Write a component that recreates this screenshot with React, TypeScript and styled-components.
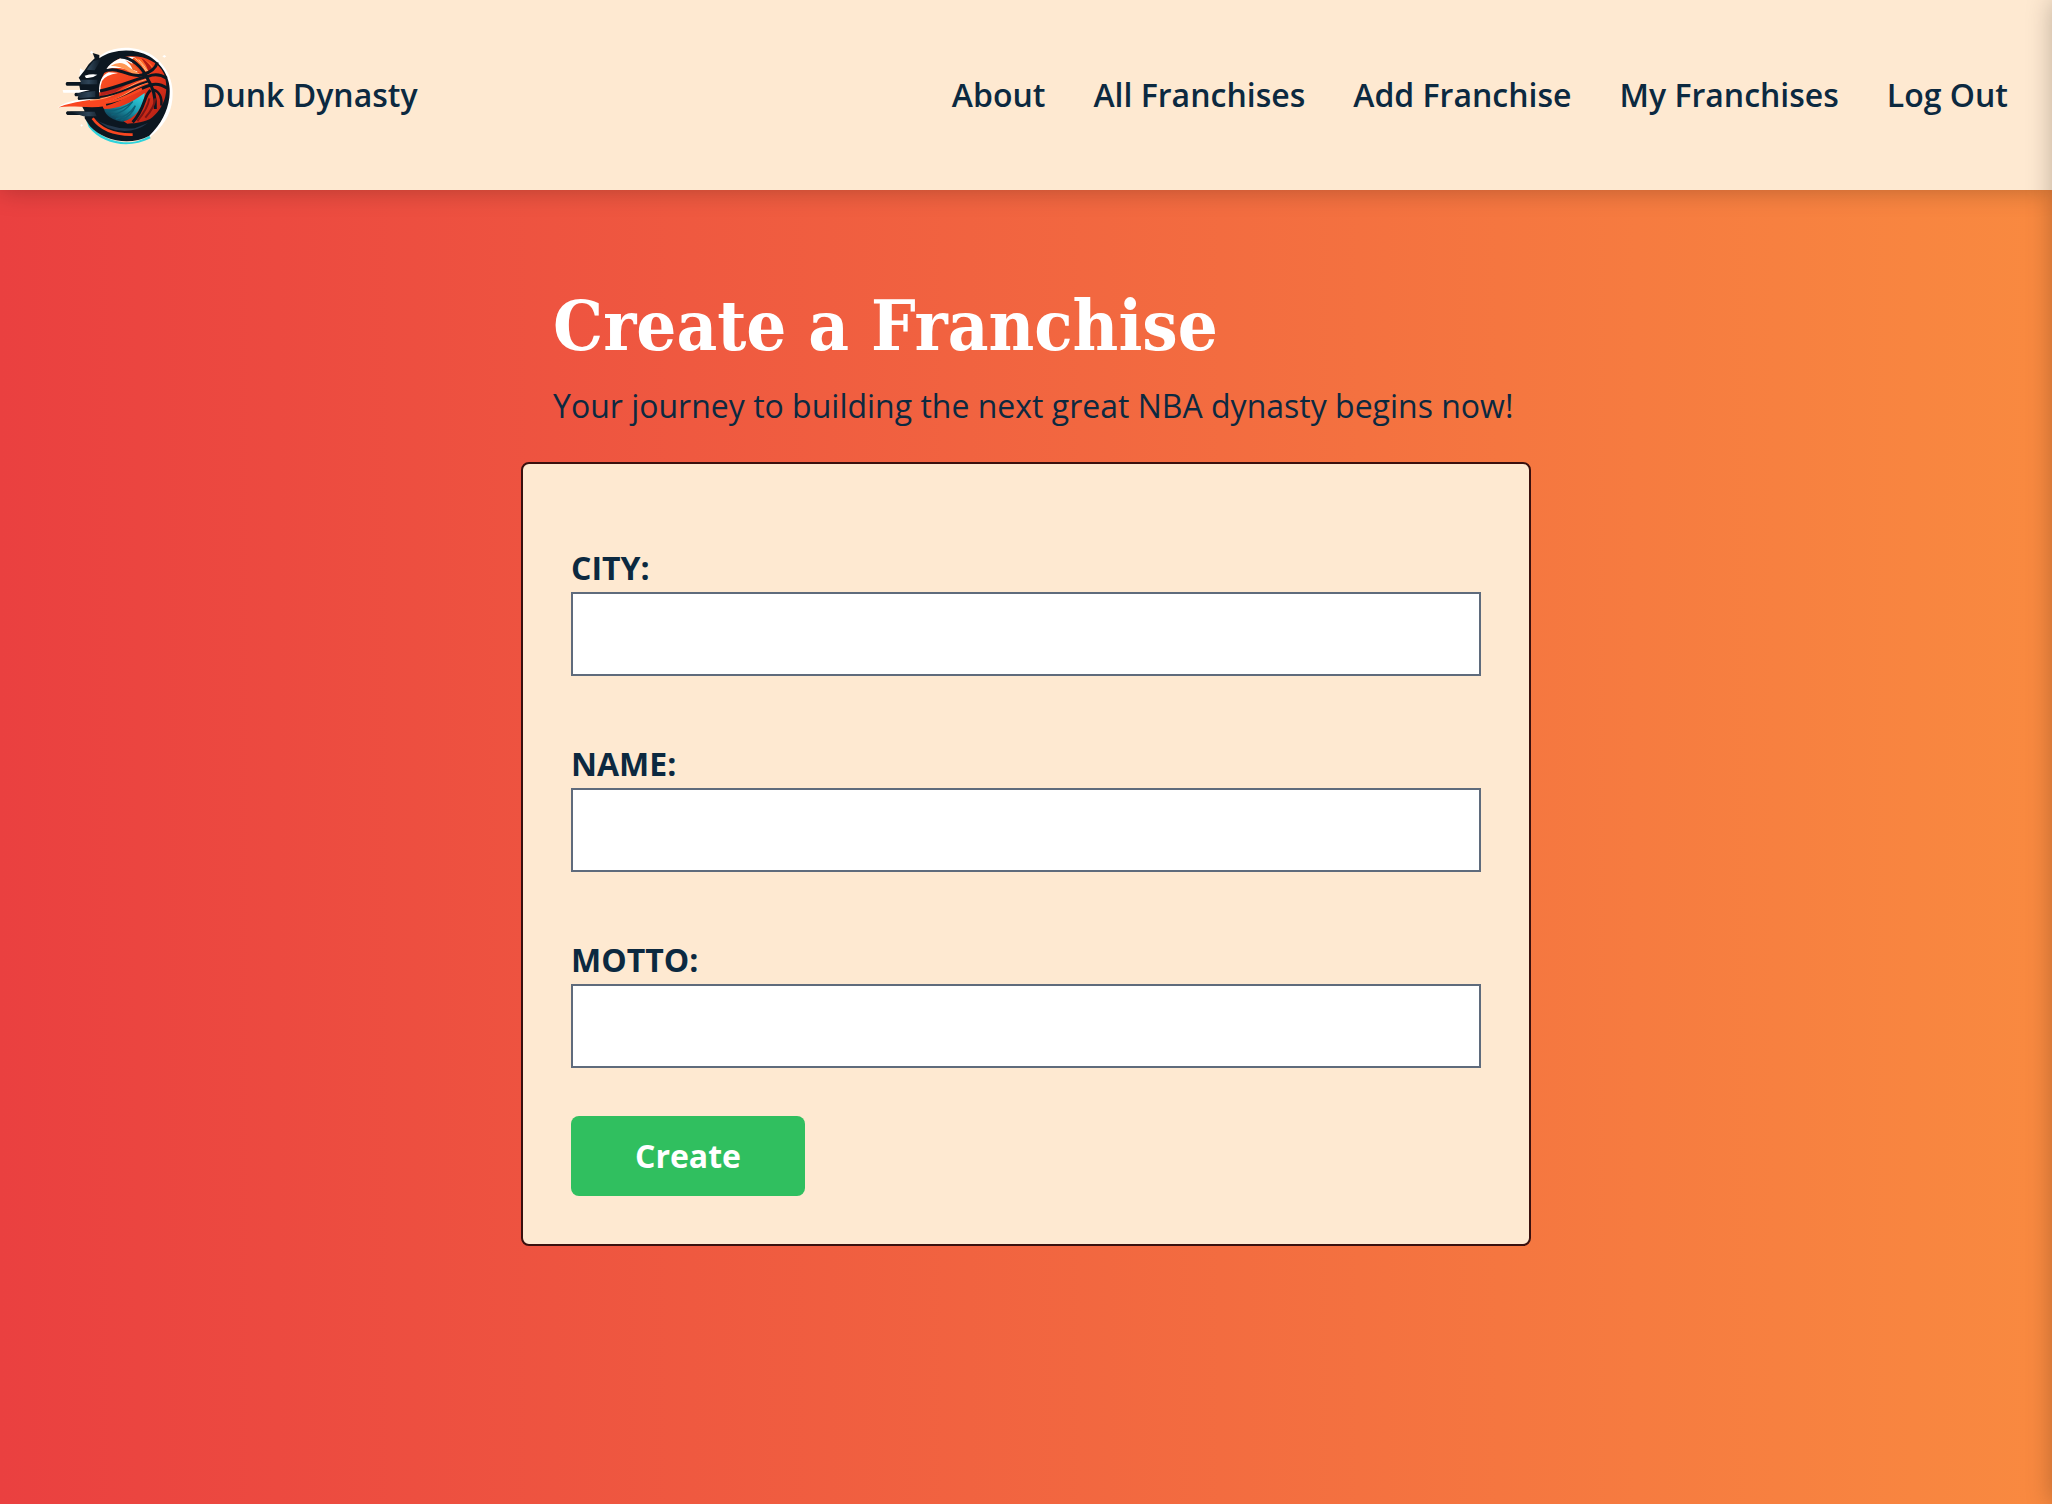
import React from 'react';
import styled, { createGlobalStyle } from 'styled-components';

const navy = '#0c2940';
const cream = '#fee9d1';

const GlobalStyle = createGlobalStyle`
  *, *::before, *::after { box-sizing: border-box; }
  body {
    margin: 0;
    color: ${navy};
    font-family: 'Open Sans', 'Noto Sans', sans-serif;
    font-size: 32px;
    line-height: 48px;
  }
`;

const Page = styled.div`
  min-height: 100vh;
  display: flex;
  flex-direction: column;
  overflow: hidden;
  background: linear-gradient(to right, #ea4040, #f98a40);
`;

const Header = styled.header`
  display: flex;
  align-items: center;
  justify-content: space-between;
  padding: 32px 44px 32px 50px;
  background: ${cream};
  box-shadow: 0 0 24px rgba(0, 0, 0, 0.25);
  font-weight: 600;
`;

const Brand = styled.a`
  display: flex;
  align-items: center;
  gap: 12px;
  color: inherit;
  text-decoration: none;
`;

const Logo = styled.svg`
  display: block;
  width: 140px;
  height: 120px;
  margin: 3px 0;
`;

const Nav = styled.nav`
  display: flex;
  gap: 48px;
`;

const NavLink = styled.a`
  color: inherit;
  text-decoration: none;
`;

const DrawerShadow = styled.div`
  position: fixed;
  top: 0;
  bottom: 0;
  left: 100%;
  width: 400px;
  box-shadow: 0 0 24px rgba(0, 0, 0, 0.25);
  pointer-events: none;
`;

const Main = styled.main`
  align-self: center;
  width: 100%;
  max-width: 1010px;
  padding: 96px 0;
`;

const Intro = styled.div`
  padding: 0 0 32px 32px;
`;

const Title = styled.h1`
  margin: 0 0 16px;
  color: #fff;
  font-family: 'DejaVu Serif Condensed', 'DejaVu Serif', serif;
  font-size: 70px;
  line-height: 80px;
  font-weight: 700;
`;

const Subtitle = styled.p`
  margin: 0;
  font-weight: 500;
`;

const Form = styled.form`
  display: flex;
  flex-direction: column;
  align-items: flex-start;
  gap: 48px;
  padding: 80px 48px 48px;
  border: 2px solid #3a100e;
  border-radius: 8px;
  background: ${cream};
`;

const Fields = styled.div`
  align-self: stretch;
  display: flex;
  flex-direction: column;
  gap: 64px;
`;

const Field = styled.div`
  display: flex;
  flex-direction: column;
`;

const Label = styled.label`
  font-weight: 700;
  text-transform: uppercase;
`;

const Input = styled.input`
  width: 100%;
  height: 84px;
  padding: 16px;
  border: 2px solid #5f6b7c;
  border-radius: 0;
  background: #fff;
  color: inherit;
  font: inherit;
`;

const Submit = styled.button`
  padding: 16px 64px;
  border: 0;
  border-radius: 8px;
  background: #30bf5f;
  color: #fff;
  font: inherit;
  font-weight: 700;
`;

const links = ['About', 'All Franchises', 'Add Franchise', 'My Franchises', 'Log Out'];
const fields = ['City', 'Name', 'Motto'];

function BasketballLogo() {
  return (
    <Logo viewBox="0 0 420 360" aria-hidden="true">
      <defs>
        <linearGradient id="ball" x1="0" y1="0" x2="1" y2="1">
          <stop offset="0" stopColor="#ff5a26" />
          <stop offset="0.5" stopColor="#ee3a1c" />
          <stop offset="1" stopColor="#a81a14" />
        </linearGradient>
        <linearGradient id="teal" x1="1" y1="0" x2="0.3" y2="1">
          <stop offset="0" stopColor="#35dbe6" />
          <stop offset="0.5" stopColor="#1c9fb3" />
          <stop offset="1" stopColor="#0e4057" />
        </linearGradient>
        <linearGradient id="steel" x1="0" y1="0" x2="1" y2="0">
          <stop offset="0" stopColor="#0c1721" />
          <stop offset="0.6" stopColor="#2f4558" />
          <stop offset="1" stopColor="#0c1721" />
        </linearGradient>
      </defs>
      <path d="M146 66C180 34 250 26 306 60C350 90 374 140 367 194C362 240 338 276 300 306L270 290L340 180L280 70Z" fill="#fff" />
      <path d="M90 100l14 8-16 30zM120 52l5-5 5 6-5 5zM337 64l6-4 6 4-6 4zM91 271l4-3 4 3-4 4z" fill="#fff" />
      <path d="M108 254C140 310 230 346 298 302L302 310C238 342 158 330 116 276Z" fill="#2fd3dc" />
      <path d="M128 54L148 60L148 70C186 42 254 38 298 64C342 92 366 138 358 188C352 230 334 266 298 302C240 334 160 318 120 274L104 250V240H52Q44 234 52 229H104L96 214H130V196H86Q80 190 86 184H76Q70 178 78 172H92L88 152H50Q44 147 50 141H94L86 128L104 106L116 88L134 70Z" fill="#0c1721" />
      <path d="M110 104l20-26 24-6-20 34zM92 134h50v14H92zM80 174l56-6v18l-48 4zM60 230h74l6 14h-40z" fill="url(#steel)" />
      <path d="M104 122q20-6 38-3-16 12-34 10z" fill="#fff" />
      <path d="M38 165h82l-34 8H40z" fill="#fff" />
      <path d="M148 180C146 116 186 66 240 64C284 62 324 80 342 116C360 170 342 222 300 252C270 266 250 264 232 266L160 220Z" fill="url(#ball)" />
      <path d="M168 104C188 72 230 60 258 68C238 66 244 90 264 112C236 106 210 92 168 104Z" fill="#fff" />
      <path d="M182 92q32-18 54 4 20 14 36 22-24 2-42-12-16-12-48-14z" fill="#ff9956" />
      <path d="M226 76q30 12 48 38l-26-10q-6-16-22-28z" fill="#ef6029" />
      <path d="M248 68Q296 70 310 98L292 118Q272 90 248 68Z" fill="#ff6829" />
      <path d="M274 70q20 10 32 30l-8 14q-8-24-24-44z" fill="#b51b14" />
      <path d="M256 70q20 14 32 38M266 74q16 16 26 34" stroke="#ffc18a" strokeWidth="3" fill="none" />
      <path d="M147 172Q146 124 176 112L204 114Q166 120 156 138Q150 152 151 172Z" fill="#fff" />
      <path d="M154 164Q200 158 232 148L196 172L150 184Z" fill="#b5211a" />
      <path d="M162 222C208 222 246 202 284 174C284 214 254 252 218 260C190 258 166 242 162 222Z" fill="url(#teal)" />
      <path d="M172 228Q216 226 248 200Q224 234 184 240M198 252Q236 244 256 212Q246 242 212 256" stroke="#0d6177" strokeWidth="4" fill="none" />
      <path d="M26 217C66 192 134 198 182 190C226 178 256 142 298 130L302 148C266 158 220 204 164 214C118 222 68 210 26 217Z" fill="#f94620" />
      <path d="M22 218C52 194 100 192 146 192Q72 198 22 218Z" fill="#fff" />
      <path d="M120 196C196 194 236 146 292 132M166 202C220 194 250 152 296 142" stroke="#ffa66b" strokeWidth="3" fill="none" />
      <g stroke="#0c1721" strokeWidth="9" fill="none">
        <path d="M212 66C246 68 276 96 292 130C310 158 318 184 316 222" />
        <path d="M154 112C206 88 236 130 276 120C308 110 318 98 322 82" />
        <path d="M150 168C214 154 256 132 294 124Q324 112 350 130" />
        <path d="M150 186C212 178 244 152 298 138" strokeWidth="6" />
        <path d="M168 208C230 190 258 162 302 150Q326 142 352 160" />
        <path d="M310 164Q338 174 334 212" strokeWidth="7" />
        <path d="M302 166C282 178 286 222 248 262" />
      </g>
      <path d="M148 206C206 202 240 178 276 162" stroke="#f94620" strokeWidth="8" fill="none" />
      <path d="M298 190Q294 220 262 258M316 190Q314 216 286 248" stroke="#7d1514" strokeWidth="6" fill="none" />
      <path d="M122 244Q180 286 254 280L294 264Q240 304 174 278Z" fill="#24384c" />
      <path d="M128 250C152 284 194 300 248 299" stroke="#f94620" strokeWidth="8" fill="none" />
    </Logo>
  );
}

export default function App() {
  return (
    <>
      <GlobalStyle />
      <Page>
        <Header>
          <Brand href="#home">
            <BasketballLogo />
            <span>Dunk Dynasty</span>
          </Brand>
          <Nav>
            {links.map((link) => (
              <NavLink key={link} href={`#${link.toLowerCase().replace(' ', '-')}`}>{link}</NavLink>
            ))}
          </Nav>
        </Header>
        <Main>
          <Intro>
            <Title>Create a Franchise</Title>
            <Subtitle>Your journey to building the next great NBA dynasty begins now!</Subtitle>
          </Intro>
          <Form>
            <Fields>
              {fields.map((field) => (
                <Field key={field}>
                  <Label htmlFor={field}>{field}:</Label>
                  <Input id={field} name={field} type="text" />
                </Field>
              ))}
            </Fields>
            <Submit type="button">Create</Submit>
          </Form>
        </Main>
      </Page>
      <DrawerShadow />
    </>
  );
}
